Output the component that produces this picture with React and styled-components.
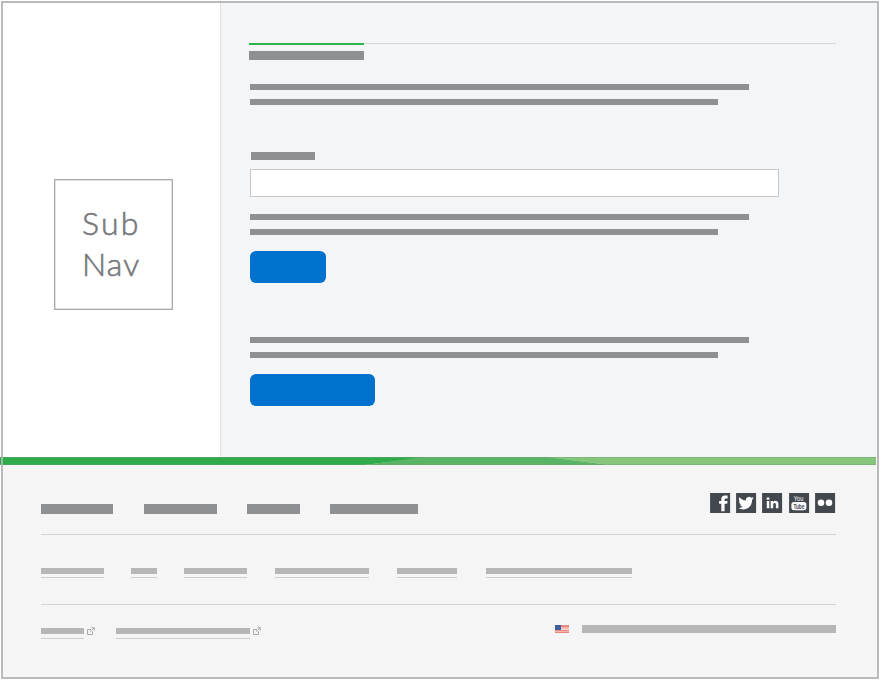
import React from "react";
import styled, { createGlobalStyle } from "styled-components";

const Global = createGlobalStyle`
  * { box-sizing: border-box; }
  body { margin: 0; background: #fff; font-family: Lato, "Liberation Sans", sans-serif; }
`;

const Frame = styled.div`
  width: 878px;
  height: 678px;
  margin: 1px 0 0 1px;
  border: 2px solid #b8babc;
  background: #f5f5f5;
  display: flow-root;
`;
const Upper = styled.div`
  display: grid;
  grid-template-columns: 218px 1fr;
  height: 454px;
`;
const Sidebar = styled.aside`
  background: #fff;
  border-right: 1px solid #dedfe0;
  padding: 176px 0 0 51px;
`;
const SubNav = styled.div`
  width: 119px;
  height: 131px;
  border: 1px solid #a8aaac;
  box-shadow: inset 0 0 0 0.5px #c4c5c6;
  padding: 22px 0 0 27px;
  color: #77787b;
  font-size: 32px;
  font-weight: 300;
  line-height: 41px;
  -webkit-text-stroke: 0.6px #77787b;
`;
const Word = styled.div`
  letter-spacing: ${(p) => p.$spacing}px;
`;
const Main = styled.main`
  background: #f4f5f7;
  padding: 40px 41px 0 28px;
`;
const Tabs = styled.div`
  height: 2px;
  margin-bottom: 6px;
  display: flex;
  align-items: flex-start;
`;
const ActiveTab = styled.div`
  width: 115px;
  height: 2px;
  background: #31b34b;
`;
const TabRule = styled.div`
  flex: 1;
  height: 1px;
  background: #d5d6d7;
`;
const Bar = styled.div`
  width: ${(p) => p.$w}px;
  height: ${(p) => p.$h || 6}px;
  background: ${(p) => (p.$light ? "#b6b6b6" : "#8f9093")};
`;
const Form = styled.div`
  padding-left: 1px;
  margin-top: 24px;
`;
const Paragraph = styled.div`
  display: grid;
  row-gap: 9px;
`;
const Field = styled.div`
  margin: 47px 0 17px;
  display: grid;
  row-gap: 9px;
`;
const Label = styled(Bar)`
  margin-left: 1px;
`;
const Input = styled.div`
  width: 529px;
  height: 28px;
  background: #fff;
  border: 1px solid #c6c8ca;
`;
const Button = styled.div`
  width: ${(p) => p.$w}px;
  height: 32px;
  margin: 16px 0 ${(p) => p.$after || 0}px;
  border-radius: 6px;
  background: #0072ce;
`;
const Ribbon = styled.svg`
  display: block;
  width: 876px;
  height: 8px;
  margin-left: -3px;
`;
const Footer = styled.footer`
  padding: 28px 41px 0 38px;
`;
const Row = styled.div`
  display: flex;
  align-items: flex-start;
`;
const TopRow = styled(Row)`
  height: 42px;
  border-bottom: 1px solid #d3d3d3;
`;
const LinkRow = styled(Row)`
  height: 70px;
  padding-top: 33px;
  border-bottom: 1px solid #d3d3d3;
`;
const LegalRow = styled(Row)`
  padding-top: 20px;
`;
const Primary = styled(Bar)`
  margin: 11px ${(p) => p.$gap}px 0 0;
`;
const Social = styled.div`
  display: flex;
  gap: 6px;
  margin: 0 1px 0 auto;
`;
const SocialIcon = styled.svg`
  display: block;
  width: 20.2px;
  height: 20px;
  overflow: visible;
`;
const Underlined = styled.div`
  width: ${(p) => p.$w}px;
  height: 10px;
  margin-right: ${(p) => p.$gap}px;
  border-bottom: 1px solid #cecece;
`;
const Legal = styled(Underlined)`
  margin-top: 3px;
  height: 11px;
`;
const External = styled.svg`
  display: block;
  width: 8px;
  height: 8px;
  margin: 2px ${(p) => p.$gap}px 0 0;
`;
const Locale = styled.div`
  margin-left: auto;
  display: flex;
  gap: 13px;
  align-items: flex-start;
`;
const Flag = styled.svg`
  display: block;
  width: 14px;
  height: 8px;
`;

const footerLinks = [
  [63, 27],
  [26, 27],
  [63, 28],
  [94, 28],
  [60, 29],
  [146, 0],
];
const primaryLinks = [
  [72, 31],
  [73, 30],
  [53, 30],
  [88, 0],
];

const glyphs = {
  facebook: (
    <path d="M11.200 18.200v-7.400H9V7.900h2.200V6.200c0-2.500 1.300-3.700 3.700-3.700h2.600v3h-1.700c-1 0-1.300.4-1.300 1.200v1.200h3l-.4 2.900h-2.600v7.400z" />
  ),
  twitter: (
    <path d="M17.600 5.100c-.6.300-1.100.4-1.700.5.600-.4 1.100-1 1.300-1.700-.6.400-1.300.6-2 .8a3.200 3.200 0 0 0-5.400 2.800C7.100 7.400 4.900 6.200 3.200 4.300c-.8 1.500-.4 3.300 1 4.300-.5 0-1-.1-1.400-.4 0 1.600 1.100 2.800 2.500 3.200-.4.100-.9.100-1.400 0 .4 1.300 1.600 2.200 3 2.200A6.500 6.500 0 0 1 2.200 15c5.300 3.300 13.800.8 13.800-8.200.6-.5 1.200-1 1.600-1.700z" />
  ),
  linkedin: (
    <path d="M4.700 8h2.500v7.300H4.700zM4.600 4.500h2.700v2.300H4.600zM8.600 8H11v1c1.500-2 5.300-1.500 5.300 1.900v4.400h-2.500v-3.800c0-2.200-2.700-2.100-2.700.1v3.700H8.600z" />
  ),
  youtube: (
    <>
      <text x="9.500" y="7.800" textAnchor="middle" fontFamily="Liberation Sans, sans-serif" fontSize="7" textLength="9.500" lengthAdjust="spacingAndGlyphs">You</text>
      <rect x="2.300" y="8.900" width="15" height="8.400" rx="2.600" />
      <text x="9.800" y="15.600" textAnchor="middle" fontFamily="Liberation Sans, sans-serif" fontSize="7" fontWeight="700" fill="#43484f" textLength="11" lengthAdjust="spacingAndGlyphs">Tube</text>
    </>
  ),
  flickr: (
    <>
      <circle cx="5.900" cy="9.700" r="3.300" />
      <circle cx="13.900" cy="9.700" r="3.300" />
    </>
  ),
};

function ExternalIcon({ gap }) {
  return (
    <External $gap={gap} viewBox="0 0 8 8" fill="none" stroke="#aaa" strokeWidth="1">
      <path d="M4 2.500H.5v5h5V4.500M2.800 5 7 1M4.500.7h2.800v2.800" />
    </External>
  );
}

export default function App() {
  return (
    <>
      <Global />
      <Frame>
        <Upper>
          <Sidebar>
            <SubNav>
              <Word $spacing={2.2}>Sub</Word>
              <Word $spacing={1.2}>Nav</Word>
            </SubNav>
          </Sidebar>
          <Main>
            <Tabs><ActiveTab /><TabRule /></Tabs>
            <Bar $w={115} $h={9} />
            <Form>
              <Paragraph><Bar $w={499} /><Bar $w={468} /></Paragraph>
              <Field><Label $w={64} $h={8} /><Input /></Field>
              <Paragraph><Bar $w={499} /><Bar $w={468} /></Paragraph>
              <Button $w={76} $after={54} />
              <Paragraph><Bar $w={499} /><Bar $w={468} /></Paragraph>
              <Button $w={125} />
            </Form>
          </Main>
        </Upper>
        <Ribbon viewBox="0 0 876 8">
          <path fill="#2fac49" d="M0 0h430L365 8H0z" />
          <path fill="#59b564" d="M422 0h128l60 8H365z" />
          <path fill="#86c67c" d="M545 0h331v8H610z" />
          <path fill="#739f79" fillOpacity=".45" d="M0 0h876v1H0zM0 7h876v1H0z" />
          <path fill="#b8babc" fillOpacity=".8" d="M1 0h2v8H1z" />
        </Ribbon>
        <Footer>
          <TopRow>
            {primaryLinks.map(([w, gap]) => <Primary key={w} $w={w} $h={10} $gap={gap} />)}
            <Social>
              {Object.entries(glyphs).map(([name, glyph]) => (
                <SocialIcon key={name} viewBox="0 0 20 20" fill="#fff" aria-label={name}>
                  <rect width="20" height="20" fill="#43484f" />
                  {glyph}
                </SocialIcon>
              ))}
            </Social>
          </TopRow>
          <LinkRow>
            {footerLinks.map(([w, gap], i) => (
              <Underlined key={i} $w={w} $gap={gap}><Bar $w={w} $light /></Underlined>
            ))}
          </LinkRow>
          <LegalRow>
            <Legal $w={43} $gap={3}><Bar $w={43} $light /></Legal>
            <ExternalIcon gap={21} />
            <Legal $w={134} $gap={3}><Bar $w={134} $light /></Legal>
            <ExternalIcon gap={0} />
            <Locale>
              <Flag viewBox="0 0 14 8">
                <path fill="#f3b5ad" d="M0 0h14v8H0z" />
                <path fill="#e8897f" d="M0 0h14v2H0zM0 5h14v1H0zM0 7h14v1H0z" />
                <path fill="#f8dcd8" d="M0 4h14v1H0z" />
                <path fill="#3f5f9a" d="M0 0h6v5H0z" />
              </Flag>
              <Bar $w={254} $h={8} $light />
            </Locale>
          </LegalRow>
        </Footer>
      </Frame>
    </>
  );
}
